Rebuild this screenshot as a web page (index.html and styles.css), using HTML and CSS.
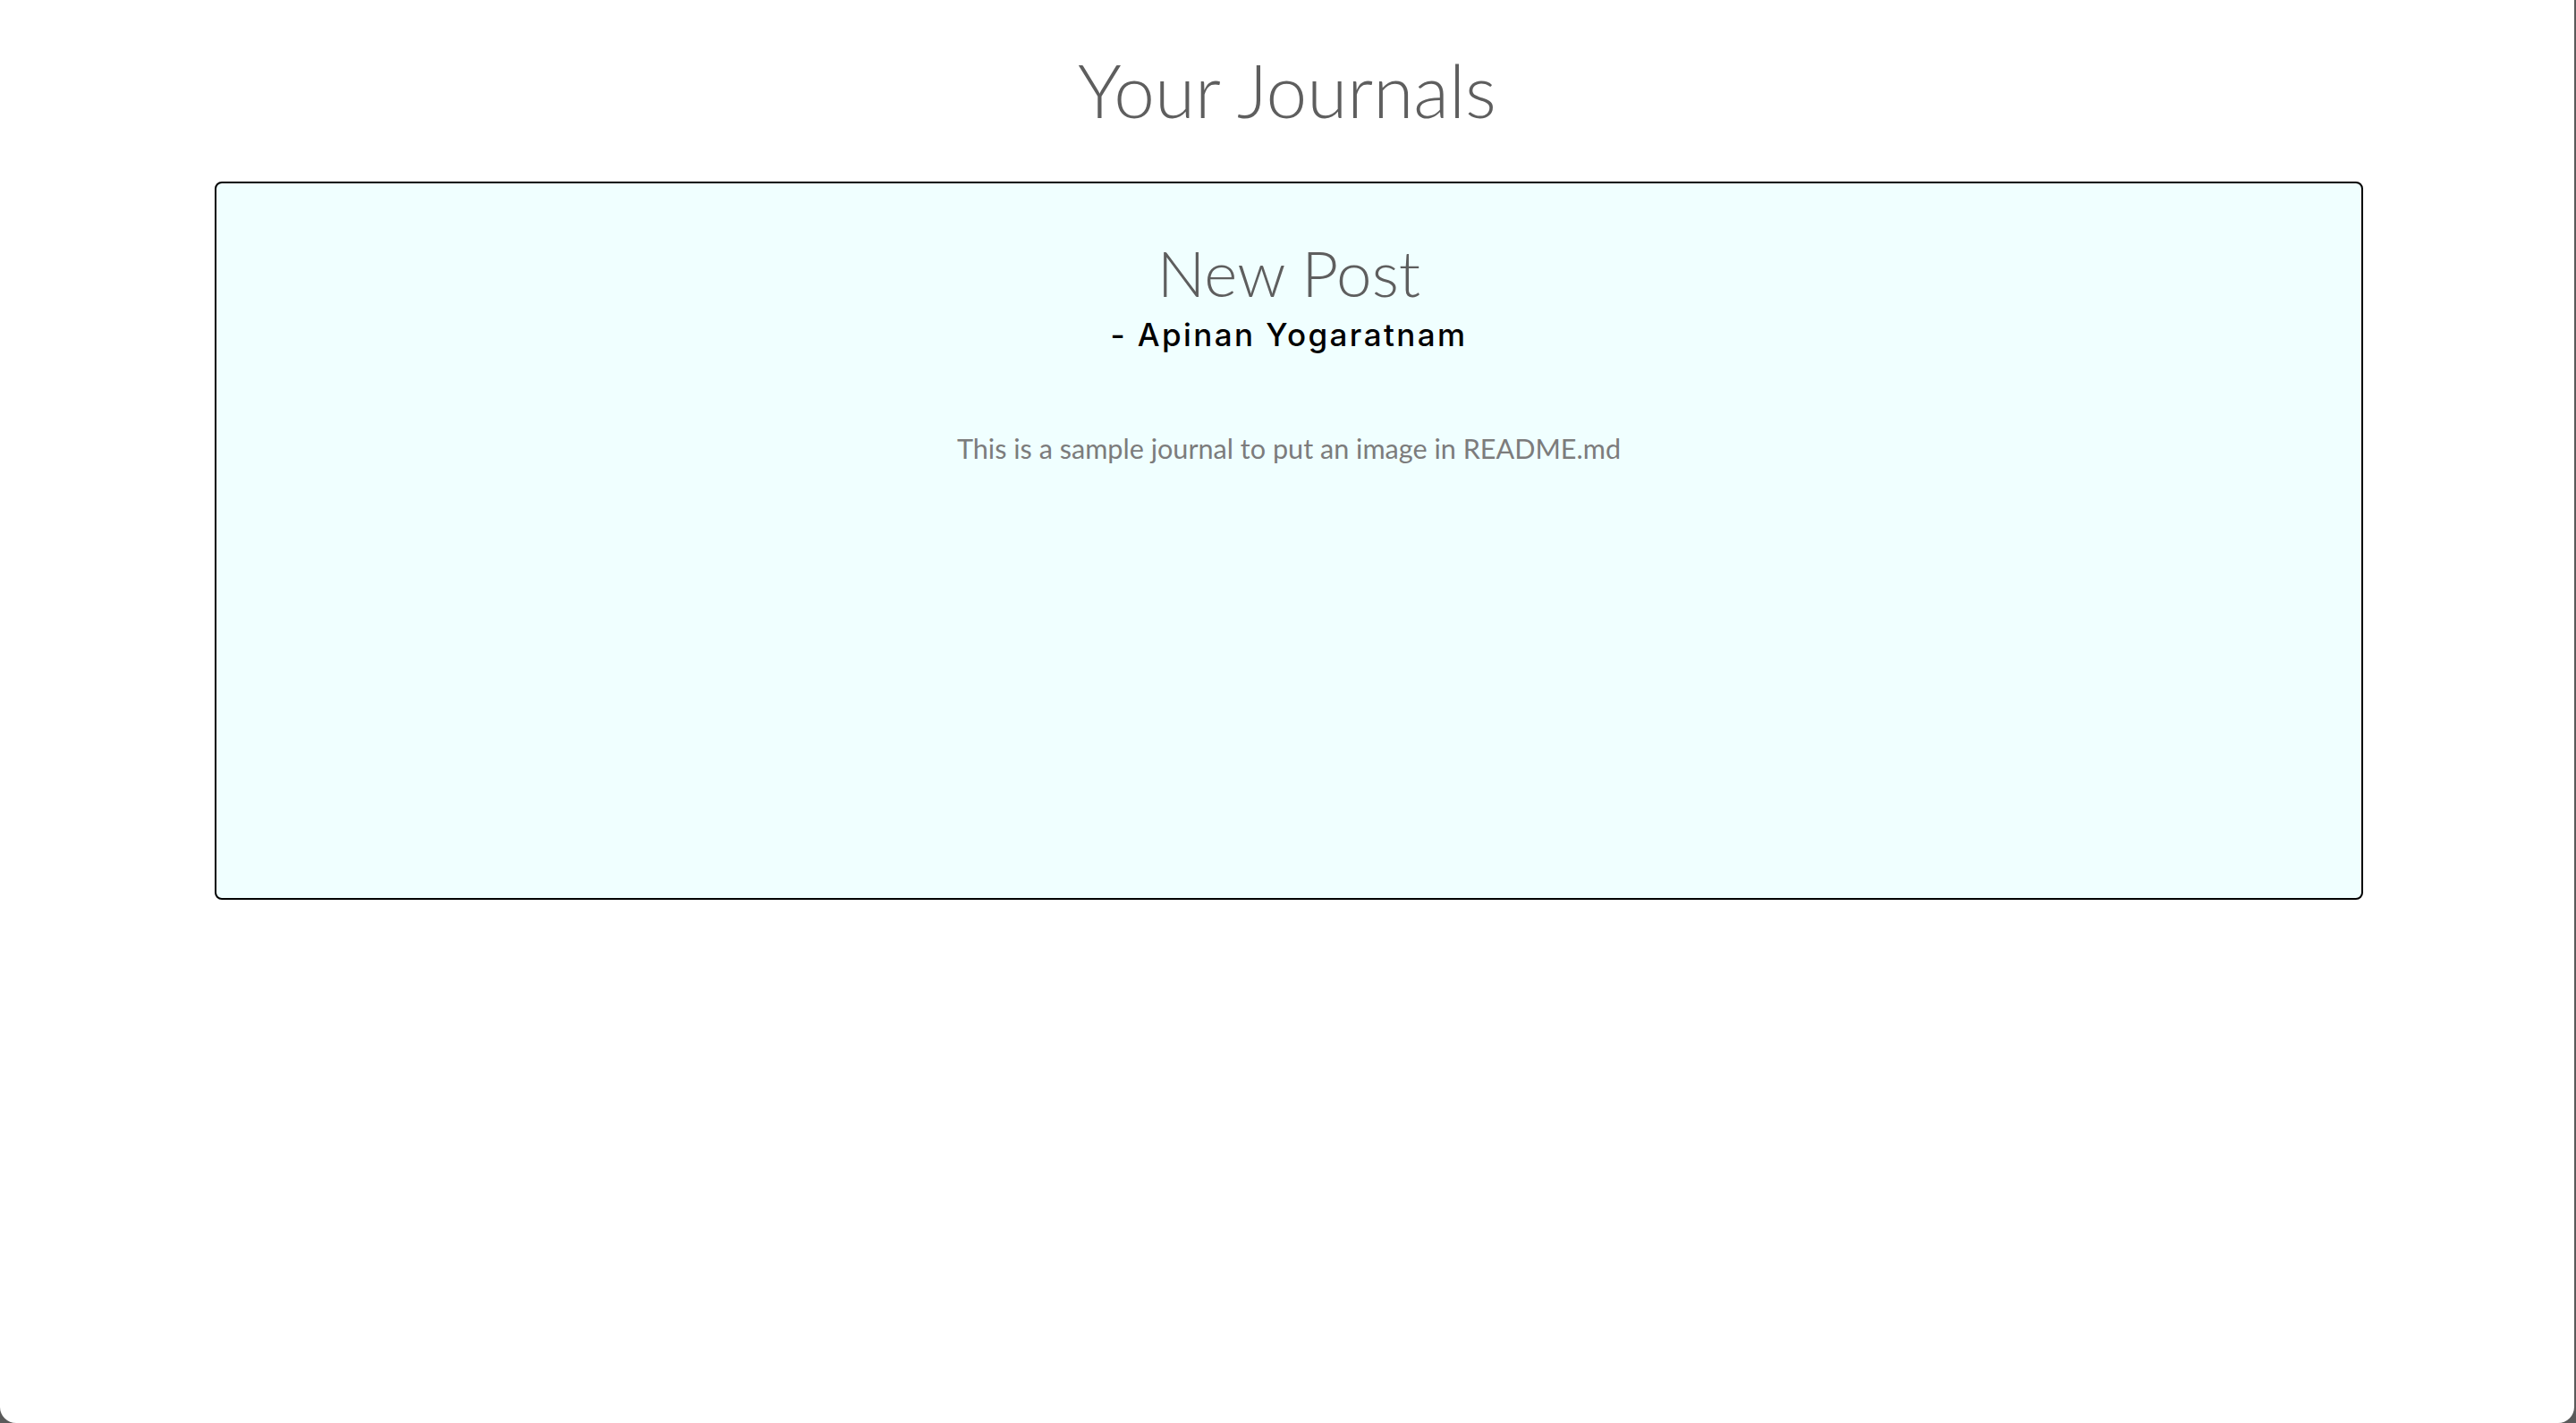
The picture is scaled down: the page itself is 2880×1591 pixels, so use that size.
FILE: index.html
```html
<!DOCTYPE html>
<html lang="en">
<head>
<meta charset="utf-8">
<title>Your Journals</title>
<link rel="stylesheet" href="styles.css">
</head>
<body>
<div class="page">
  <h1 class="page-title">Your Journals</h1>
  <div class="journal-list">
    <article class="journal-card">
      <h2 class="journal-title">New Post</h2>
      <p class="journal-author">- Apinan Yogaratnam</p>
      <p class="journal-body">This is a sample journal to put an image in README.md</p>
    </article>
  </div>
</div>
</body>
</html>
```

FILE: styles.css
```css
html {
  background: #5a5a5a;
  height: 100%;
}
body {
  margin: 0;
  height: 100%;
}
.page {
  box-sizing: border-box;
  height: 100%;
  margin-right: 2px;
  background: #ffffff;
  border-bottom-left-radius: 18px;
  border-bottom-right-radius: 18px;
  padding-top: 51px;
  font-family: "Lato", "Liberation Sans", sans-serif;
}
.page-title {
  margin: 0;
  text-align: center;
  font-family: "Lato", sans-serif;
  font-weight: 300;
  font-size: 82px;
  line-height: 1.2;
  color: #5e5e5e;
}
.journal-list {
  display: flex;
  flex-direction: column;
  padding: 54px 236px 0 240px;
}
.journal-card {
  box-sizing: border-box;
  height: 803px;
  background: #f0ffff;
  border: 2px solid #000000;
  border-radius: 8px;
  padding-top: 57px;
  text-align: center;
}
.journal-title {
  margin: 0;
  font-family: "Lato", sans-serif;
  font-weight: 300;
  font-size: 71px;
  line-height: 1.2;
  color: #5e5e5e;
}
.journal-author {
  margin: 5px 0 0;
  font-family: "Inter", "Noto Sans", sans-serif;
  font-weight: 500;
  font-size: 35px;
  letter-spacing: 2.4px;
  line-height: 1.2;
  color: #000000;
}
.journal-body {
  margin: 89px 0 0;
  font-family: "Lato", sans-serif;
  font-weight: 400;
  font-size: 30.6px;
  line-height: 1.2;
  color: #7c7c7c;
}
```
